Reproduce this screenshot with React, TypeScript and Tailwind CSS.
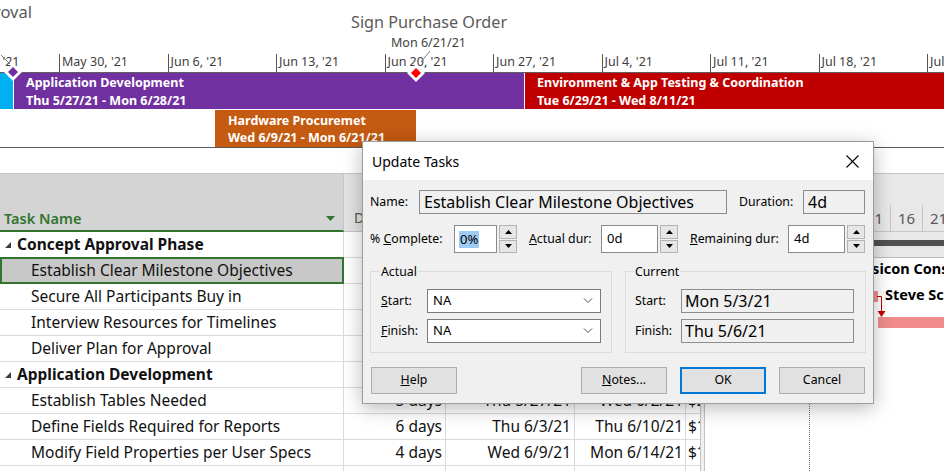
import React from 'react';

const TICKS = ["May 23, '21", "May 30, '21", "Jun 6, '21", "Jun 13, '21", "Jun 20, '21", "Jun 27, '21", "Jul 4, '21", "Jul 11, '21", "Jul 18, '21", "Jul 25, '21"];
const TICK_START = -49.5;
const TICK_STEP = 108.5;

const DAY_LABELS = ['21', '26', '1', '6', '11', '16', '21'];

type Row = {
  name: string;
  summary?: boolean;
  selected?: boolean;
  dur: string;
  start: string;
  finish: string;
  cost: string;
};

const ROWS: Row[] = [
  { name: 'Concept Approval Phase', summary: true, dur: '18 days', start: 'Mon 5/3/21', finish: 'Wed 5/26/21', cost: '$8,640.00' },
  { name: 'Establish Clear Milestone Objectives', selected: true, dur: '4 days', start: 'Mon 5/3/21', finish: 'Thu 5/6/21', cost: '$1,920.00' },
  { name: 'Secure All Participants Buy in', dur: '5 days', start: 'Fri 5/7/21', finish: 'Thu 5/13/21', cost: '$2,400.00' },
  { name: 'Interview Resources for Timelines', dur: '6 days', start: 'Fri 5/14/21', finish: 'Fri 5/21/21', cost: '$2,880.00' },
  { name: 'Deliver Plan for Approval', dur: '3 days', start: 'Mon 5/24/21', finish: 'Wed 5/26/21', cost: '$1,440.00' },
  { name: 'Application Development', summary: true, dur: '23 days', start: 'Thu 5/27/21', finish: 'Mon 6/28/21', cost: '$11,040.00' },
  { name: 'Establish Tables Needed', dur: '5 days', start: 'Thu 5/27/21', finish: 'Wed 6/2/21', cost: '$2,400.00' },
  { name: 'Define Fields Required for Reports', dur: '6 days', start: 'Thu 6/3/21', finish: 'Thu 6/10/21', cost: '$1,920.00' },
  { name: 'Modify Field Properties per User Specs', dur: '4 days', start: 'Wed 6/9/21', finish: 'Mon 6/14/21', cost: '$1,920.00' },
  { name: '', dur: '', start: '', finish: '', cost: '' },
];

const Diamond = ({ color, className }: { color: string; className: string }) => (
  <svg width="18" height="18" viewBox="0 0 18 18" className={className}>
    <polygon points="9,0 18,9 9,18 0,9" fill="#fff" />
    <polygon points="9,4 14,9 9,14 4,9" fill={color} />
  </svg>
);

const Timeline = () => (
  <div className="relative h-[148px] border-b border-[#595959]">
    <div className="relative h-[73px] border-b border-[#5f5f5f]">
      <span className="absolute right-[912px] top-[1px] whitespace-nowrap text-[16.5px] leading-[22px] text-[#5a5a5a]">
        Concept Approval
      </span>
      <span className="absolute left-[351px] top-[11px] whitespace-nowrap text-[16.2px] leading-[22px] text-[#5a5a5a]">
        Sign Purchase Order
      </span>
      <span className="absolute left-[391px] top-[35px] whitespace-nowrap text-[12.5px] leading-[16px] text-[#404040]">
        Mon 6/21/21
      </span>
      {TICKS.map((t, i) => (
        <div key={t} className="absolute top-[54px] flex h-[19px] items-start" style={{ left: TICK_START + TICK_STEP * i }}>
          <div className="h-full w-px bg-[#555]" />
          <span className="ml-[2px] whitespace-nowrap text-[12.5px] leading-[15px] text-[#404040]">{t}</span>
        </div>
      ))}
      <svg className="absolute left-0 top-0" width="944" height="73">
        <line x1="1" y1="55" x2="10" y2="64" stroke="#7f7f7f" strokeWidth="1" />
        <line x1="430" y1="51" x2="421" y2="62" stroke="#7f7f7f" strokeWidth="1" />
      </svg>
    </div>

    <div className="flex h-[36px] text-[12.5px] font-bold leading-[18px] text-white">
      <div className="w-[13px] bg-[#00b0f0]" />
      <div className="ml-px w-[510px] bg-[#7030a0] pl-[12px] pt-px">
        <div>Application Development</div>
        <div>Thu 5/27/21 - Mon 6/28/21</div>
      </div>
      <div className="ml-px flex-1 bg-[#c00000] pl-[12px] pt-px">
        <div>Environment &amp; App Testing &amp; Coordination</div>
        <div>Tue 6/29/21 - Wed 8/11/21</div>
      </div>
    </div>
    <div className="mt-px flex h-[37px] text-[12.5px] font-bold leading-[17px] text-white">
      <div className="ml-[215px] w-[201px] bg-[#c55a11] pl-[13px] pt-[2px]">
        <div>Hardware Procuremet</div>
        <div>Wed 6/9/21 - Mon 6/21/21</div>
      </div>
    </div>

    <Diamond color="#7030a0" className="absolute left-[4px] top-[63px]" />
    <Diamond color="#ff0000" className="absolute left-[407px] top-[64px]" />
  </div>
);

const Expander = () => (
  <svg width="6" height="6" viewBox="0 0 6 6" className="mr-[6px] shrink-0">
    <polygon points="6,0 6,6 0,6" fill="#3c3c3c" />
  </svg>
);

const TaskTable = () => (
  <div className="w-[700px] shrink-0 text-[15.5px] text-[#111]">
    <div className="flex h-[59px] border-t border-[#c6c6c6] text-[14px]">
      <div className="flex w-[344px] items-end justify-between border-b-2 border-r border-b-[#31752f] border-r-[#c6c6c6] bg-[#d4d4d4] pb-[2px] pl-[4px] pr-[8px]">
        <span className="text-[14.5px] font-semibold leading-[20px] text-[#31752f]">Task Name</span>
        <svg width="9" height="5" viewBox="0 0 9 5" className="mb-[7px]">
          <polygon points="0,0 9,0 4.5,5" fill="#31752f" />
        </svg>
      </div>
      <div className="flex w-[102px] items-end border-b border-r border-[#c6c6c6] bg-[#e3e3e3] pb-[3px] pl-[10px] text-[#555]">
        Duration
      </div>
      <div className="flex w-[129px] items-end border-b border-r border-[#c6c6c6] bg-[#e3e3e3] pb-[3px] pl-[8px] text-[#555]">Start</div>
      <div className="flex w-[111px] items-end border-b border-r border-[#c6c6c6] bg-[#e3e3e3] pb-[3px] pl-[8px] text-[#555]">Finish</div>
      <div className="flex w-[14px] items-end overflow-hidden border-b border-[#c6c6c6] bg-[#e3e3e3] pb-[3px] pl-[2px] text-[#555]">Cost</div>
    </div>
    {ROWS.map((r, i) => (
      <div key={i} className="flex h-[26px] border-b border-[#dadada]">
        <div
          className={`relative flex w-[344px] items-center border-r border-[#dadada] ${
            r.summary ? 'pl-[5px] font-bold' : 'pl-[31px]'
          } ${r.selected ? 'bg-[#c8c8c8]' : ''}`}
        >
          {r.summary && <Expander />}
          <span className="whitespace-nowrap">{r.name}</span>
          {r.selected && <div className="absolute -bottom-px -right-px -top-px left-0 border-2 border-[#31752f]" />}
        </div>
        <div className="flex w-[102px] items-center justify-end border-r border-[#dadada] pr-[3px]">{r.dur}</div>
        <div className="flex w-[129px] items-center justify-end border-r border-[#dadada] pr-[3px]">{r.start}</div>
        <div className="flex w-[111px] items-center justify-end border-r border-[#dadada] pr-[2px]">{r.finish}</div>
        <div className="flex w-[14px] items-center overflow-hidden whitespace-nowrap pl-[2px]">{r.cost}</div>
      </div>
    ))}
  </div>
);

const Gantt = () => (
  <div className="relative flex-1 overflow-hidden">
    <div className="flex h-[59px] items-end border-y border-[#c6c6c6] bg-[#e8e8e8]">
      <div className="h-[26px] w-[25px] shrink-0" />
      {DAY_LABELS.map((d, i) => (
        <div key={i} className="flex h-[26px] w-[32px] shrink-0 items-center justify-center border-l border-[#c4c4c4] text-[15px] text-[#595959]">
          {d}
        </div>
      ))}
    </div>
    <div className="relative h-[239px]">
      <div className="h-[26px] border-b border-[#bdbdbd] bg-[#e8e8e8]" />
      <div className="absolute bottom-0 left-[104px] top-0 border-l border-dotted border-[#6b6b6b]" />
      <div className="absolute left-[75px] right-0 top-[8px] h-[6px] bg-[#505050]" />
      <span className="absolute left-[144px] top-[27px] whitespace-nowrap text-[14.5px] font-bold leading-[18px]">Musicon Consulting</span>
      <div className="absolute left-[160px] top-[59px] h-[11px] w-[13px] bg-[#f08c8c]" />
      <span className="absolute left-[180px] top-[53px] whitespace-nowrap text-[14.5px] font-bold leading-[18px]">Steve Schmidt</span>
      <div className="absolute left-[173px] right-0 top-[85px] h-[11px] bg-[#f08c8c]" />
      <svg className="absolute left-0 top-0" width="239" height="100">
        <polyline points="172,64.5 176.5,64.5 176.5,80" fill="none" stroke="#c00000" strokeWidth="1" />
        <polygon points="172.5,79 180.5,79 176.5,85" fill="#c00000" />
      </svg>
    </div>
  </div>
);

const Spinner = () => (
  <div className="ml-[2px] flex h-[28px] w-[18px] flex-col gap-px">
    <div className="flex flex-1 items-center justify-center border border-[#b4b4b4] bg-[#e6e6e6]">
      <svg width="7" height="4" viewBox="0 0 7 4">
        <polygon points="3.5,0 7,4 0,4" fill="#000" />
      </svg>
    </div>
    <div className="flex flex-1 items-center justify-center border border-[#b4b4b4] bg-[#e6e6e6]">
      <svg width="7" height="4" viewBox="0 0 7 4">
        <polygon points="0,0 7,0 3.5,4" fill="#000" />
      </svg>
    </div>
  </div>
);

const Chevron = () => (
  <svg width="10" height="6" viewBox="0 0 10 6">
    <polyline points="1,0.5 5,4.5 9,0.5" fill="none" stroke="#505050" strokeWidth="1" />
  </svg>
);

const Combo = ({ value }: { value: string }) => (
  <div className="flex h-[24px] w-[174px] items-center justify-between border border-[#7a7a7a] bg-white pl-[5px] pr-[7px] text-[13px]">
    <span>{value}</span>
    <Chevron />
  </div>
);

const ReadBox = ({ value, w }: { value: string; w: string }) => (
  <div className={`flex h-[24px] items-center border border-[#8c8c8c] bg-[#f0f0f0] text-[16px] ${w}`}>{value}</div>
);

const Dialog = () => (
  <div className="absolute left-[362px] top-[141px] w-[512px] border border-[#9c9c9c] bg-[#f0f0f0] text-[12.3px] text-black shadow-[0_4px_18px_rgba(0,0,0,0.28)]">
    <div className="flex h-[38px] items-center justify-between bg-white pl-[9px] pr-[14px]">
      <span className="text-[14px]">Update Tasks</span>
      <svg width="13" height="13" viewBox="0 0 13 13">
        <line x1="0.5" y1="0.5" x2="12.5" y2="12.5" stroke="#000" strokeWidth="1.1" />
        <line x1="12.5" y1="0.5" x2="0.5" y2="12.5" stroke="#000" strokeWidth="1.1" />
      </svg>
    </div>
    <div className="h-[223px] pl-[7px] pt-[10px]">
      <div className="flex h-[24px] items-center">
        <span className="w-[49px]">Name:</span>
        <ReadBox value="Establish Clear Milestone Objectives" w="w-[308px] pl-[4px]" />
        <span className="ml-[12px] w-[64px]">Duration:</span>
        <ReadBox value="4d" w="w-[62px] pl-[4px]" />
      </div>
      <div className="mt-[11px] flex h-[28px] items-center">
        <span className="w-[84px]">
          % <u>C</u>omplete:
        </span>
        <div className="flex h-[28px] w-[43px] items-center border border-[#8a8a8a] bg-white pl-[4px] text-[13px]">
          <span className="bg-[#9dcbf1] px-px leading-[17px]">0%</span>
        </div>
        <Spinner />
        <span className="ml-[12px] w-[72px]">
          <u>A</u>ctual dur:
        </span>
        <div className="flex h-[28px] w-[57px] items-center border border-[#8a8a8a] bg-white pl-[5px] text-[13px]">0d</div>
        <Spinner />
        <span className="ml-[12px] w-[98px]">
          <u>R</u>emaining dur:
        </span>
        <div className="flex h-[28px] w-[57px] items-center border border-[#8a8a8a] bg-white pl-[5px] text-[13px]">4d</div>
        <Spinner />
      </div>

      <div className="mt-[18px] flex">
        <div className="h-[82px] w-[242px] border border-[#dcdcdc] pl-[10px]">
          <span className="-mt-[8px] ml-[-1px] block w-fit bg-[#f0f0f0] px-px leading-[16px]">Actual</span>
          <div className="mt-[9px] flex h-[24px] items-center">
            <span className="w-[46px]">
              <u>S</u>tart:
            </span>
            <Combo value="NA" />
          </div>
          <div className="mt-[6px] flex h-[24px] items-center">
            <span className="w-[46px]">
              <u>F</u>inish:
            </span>
            <Combo value="NA" />
          </div>
        </div>
        <div className="ml-[13px] h-[82px] w-[241px] border border-[#dcdcdc] pl-[9px]">
          <span className="-mt-[8px] ml-[-1px] block w-fit bg-[#f0f0f0] px-px leading-[16px]">Current</span>
          <div className="mt-[9px] flex h-[24px] items-center">
            <span className="w-[46px]">Start:</span>
            <ReadBox value="Mon 5/3/21" w="w-[173px] pl-[3px]" />
          </div>
          <div className="mt-[6px] flex h-[24px] items-center">
            <span className="w-[46px]">Finish:</span>
            <ReadBox value="Thu 5/6/21" w="w-[173px] pl-[3px]" />
          </div>
        </div>
      </div>

      <div className="mt-[14px] flex">
        <button className="ml-px h-[27px] w-[86px] border border-[#adadad] bg-[#e1e1e1]">
          <u>H</u>elp
        </button>
        <button className="ml-[124px] h-[27px] w-[86px] border border-[#adadad] bg-[#e1e1e1]">
          <u>N</u>otes...
        </button>
        <button className="ml-[13px] h-[27px] w-[86px] border-2 border-[#0078d7] bg-[#e1e1e1]">OK</button>
        <button className="ml-[13px] h-[27px] w-[86px] border border-[#adadad] bg-[#e1e1e1]">Cancel</button>
      </div>
    </div>
  </div>
);

export default function App() {
  return (
    <div className="relative h-[471px] w-[944px] overflow-hidden bg-white font-['Noto_Sans','Open_Sans',sans-serif]">
      <Timeline />
      <div className="h-[25px]" />
      <div className="flex h-[298px]">
        <TaskTable />
        <div className="w-[5px] shrink-0 border-x border-[#c3c3c3] bg-[#efefef]" />
        <Gantt />
      </div>
      <Dialog />
    </div>
  );
}
